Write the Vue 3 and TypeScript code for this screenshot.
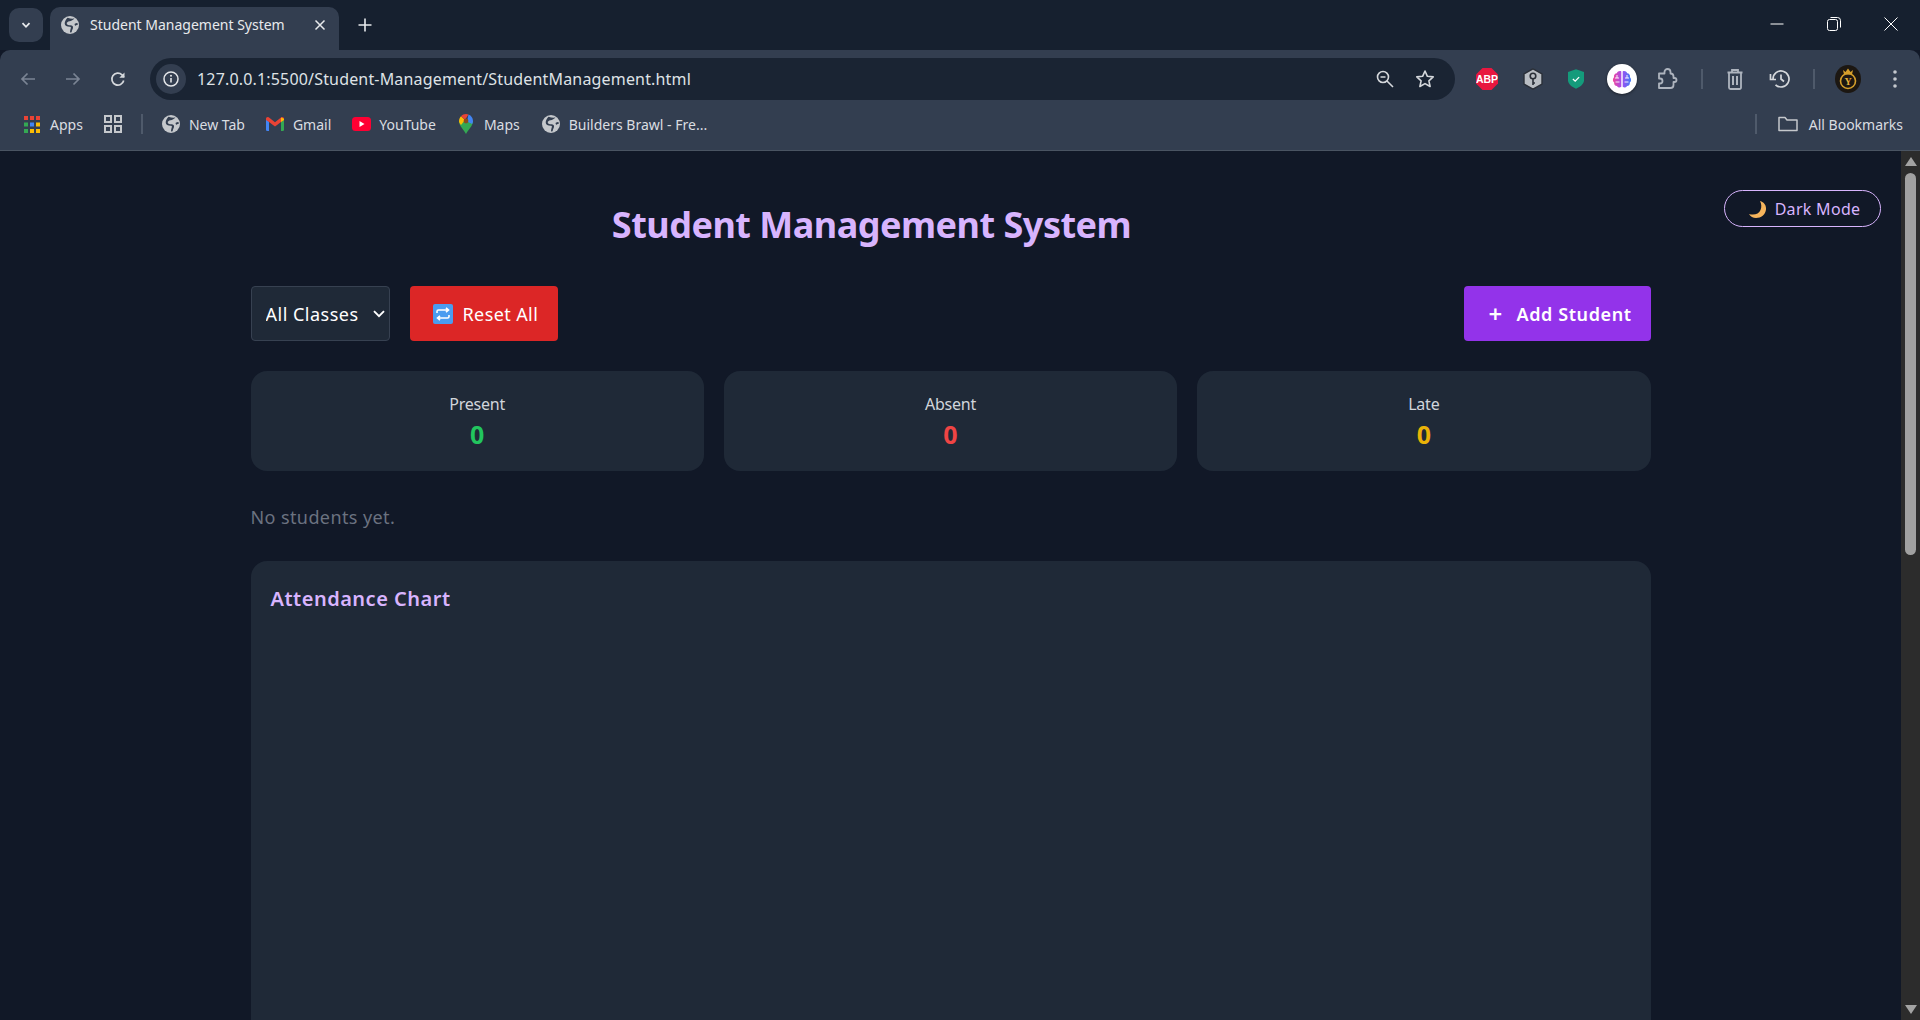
<script setup lang="ts">
import { ref } from 'vue'

interface Bookmark {
  label: string
  icon: string
}

interface Stat {
  label: string
  tone: string
  value: number
}

const bookmarks: Bookmark[] = [
  { label: 'New Tab', icon: 'globe' },
  { label: 'Gmail', icon: 'gmail' },
  { label: 'YouTube', icon: 'youtube' },
  { label: 'Maps', icon: 'maps' },
  { label: 'Builders Brawl - Fre...', icon: 'globe' },
]

const stats: Stat[] = [
  { label: 'Present', tone: 'green', value: 0 },
  { label: 'Absent', tone: 'red', value: 0 },
  { label: 'Late', tone: 'yellow', value: 0 },
]

const selectedClass = ref('all')
const url = '127.0.0.1:5500/Student-Management/StudentManagement.html'
</script>

<template>
  <div class="window">
    <svg class="defs" width="0" height="0" aria-hidden="true">
      <symbol id="globe" viewBox="0 0 18 18">
        <circle cx="9" cy="9" r="9" fill="#c5c8cc" />
        <path d="M6.500 1.800C9 2.600 11.500 2.800 13.500 2.500 12 4 10.500 5 8.500 5.300 6.800 5.600 5.500 6.500 5.800 7.800c.3 1.200 2 1.500 3.700 1.500 1.800 0 2.800 1 2.500 2.600-.3 1.500-1.300 2.500-1.300 4.300l-1.700.2c0-2 .7-3.300.9-4.600.1-.8-.5-1.100-1.400-1.100C6 10.700 3.700 9.600 3.700 7.500c0-2 1.300-4 2.800-5.700zM13.500 8c1-.7 2-1 3-.9l.2 1.900c-1.200 0-2 .2-2.600.9z" fill="#333e50" />
      </symbol>
      <symbol id="gmail" viewBox="0 0 18 14">
        <path d="M0 2.500 3 4.500V14H1.300A1.300 1.300 0 0 1 0 12.700z" fill="#4285f4" />
        <path d="M15 4.500 18 2.500v10.200a1.300 1.300 0 0 1-1.300 1.300H15z" fill="#34a853" />
        <path d="M3 5 0 3V1.800C0 .300 1.600-.500 2.800.400L3 .6 9 5.200 15 .6l.2-.2C16.400-.5 18 .300 18 1.800V3l-3 2-6 4.500z" fill="#ea4335" />
        <path d="M15 .6 18 1.800V3l-3 2z" fill="#fbbc04" />
      </symbol>
      <symbol id="youtube" viewBox="0 0 19 14">
        <rect width="19" height="14" rx="3.500" fill="#ff0033" />
        <path d="M7.500 4v6l5-3z" fill="#fff" />
      </symbol>
      <symbol id="maps" viewBox="0 0 14 20">
        <path d="M7 20C5.500 16.500 0 12 0 7h14c0 5-5.500 9.500-7 13z" fill="#34a853" />
        <path d="M0 7C0 5 .8 3.500 2 2.200L6 6 2 11C.8 9.800 0 8.500 0 7z" fill="#fbbc04" />
        <path d="M2 2.200C3.300.8 5 0 7 0l2.500.5L6 6z" fill="#ea4335" />
        <path d="M9.500.5C12 1.500 14 4 14 7c0 1-.3 2-.8 3L8 7.500z" fill="#4285f4" />
        <circle cx="7" cy="7" r="2.400" fill="#8a4b1f" />
      </symbol>
    </svg>

    <div class="tabstrip">
      <div class="tab-list">
        <svg width="12" height="12" viewBox="0 0 12 12"><path d="M2.500 4.200 6 7.800l3.500-3.600" fill="none" stroke="#e8eaed" stroke-width="1.800" /></svg>
      </div>
      <div class="tab">
        <svg class="tab-icon" width="18" height="18"><use href="#globe" /></svg>
        <span class="tab-title">Student Management System</span>
        <svg class="tab-close" width="12" height="12" viewBox="0 0 12 12"><path d="M1.500 1.500l9 9m0-9-9 9" stroke="#e8eaed" stroke-width="1.500" /></svg>
      </div>
      <svg class="new-tab" width="14" height="14" viewBox="0 0 14 14"><path d="M7 .5v13M.5 7h13" stroke="#e8eaed" stroke-width="1.600" /></svg>
      <div class="window-controls">
        <svg width="14" height="14" viewBox="0 0 14 14"><path d="M.5 7h13" stroke="#fff" stroke-width="1" /></svg>
        <svg width="14" height="14" viewBox="0 0 14 14"><rect x=".5" y="2.500" width="10" height="11" rx="2" fill="none" stroke="#fff" /><path d="M3.500.5h7a3 3 0 0 1 3 3v7" fill="none" stroke="#fff" /></svg>
        <svg width="14" height="14" viewBox="0 0 14 14"><path d="M.5.500l13 13m0-13-13 13" stroke="#fff" stroke-width="1" /></svg>
      </div>
    </div>

    <div class="toolbar">
      <div class="nav-buttons">
        <svg width="18" height="18" viewBox="0 0 18 18"><path d="M16 9H3M8.500 3.500 3 9l5.500 5.500" fill="none" stroke="#7b8494" stroke-width="1.700" /></svg>
        <svg width="18" height="18" viewBox="0 0 18 18"><path d="M2 9h13M9.500 3.500 15 9l-5.500 5.500" fill="none" stroke="#7b8494" stroke-width="1.700" /></svg>
        <svg width="18" height="18" viewBox="0 0 18 18"><path d="M14.700 10.500A6 6 0 1 1 13 4.800L15 7" fill="none" stroke="#d5d8dc" stroke-width="1.700" /><path d="M15.500 2.500v5.200h-5.200z" fill="#d5d8dc" /></svg>
      </div>
      <div class="omnibox">
        <div class="site-info">
          <svg width="16" height="16" viewBox="0 0 16 16"><circle cx="8" cy="8" r="7" fill="none" stroke="#e3e5e8" stroke-width="1.500" /><path d="M8 7v4.500" stroke="#e3e5e8" stroke-width="1.600" /><circle cx="8" cy="4.800" r="1" fill="#e3e5e8" /></svg>
        </div>
        <span class="url">{{ url }}</span>
        <svg class="omni-zoom" width="20" height="20" viewBox="0 0 20 20"><circle cx="8" cy="8" r="5.500" fill="none" stroke="#d5d8dc" stroke-width="1.600" /><path d="M12 12l6 6M5.500 8h5" stroke="#d5d8dc" stroke-width="1.600" /></svg>
        <svg class="omni-star" width="20" height="20" viewBox="0 0 20 20"><path d="M10 2l2.400 5.300 5.800.6-4.300 3.900 1.200 5.700L10 14.600l-5.100 2.900 1.200-5.700L1.800 7.900l5.800-.6z" fill="none" stroke="#d5d8dc" stroke-width="1.600" stroke-linejoin="round" /></svg>
      </div>
      <div class="extensions">
        <svg class="ext" width="22" height="22" viewBox="0 0 22 22"><path d="M6.500 0h9L22 6.500v9L15.500 22h-9L0 15.500v-9z" fill="#e8173f" /><text x="11" y="15" text-anchor="middle" class="abp-text">ABP</text></svg>
        <svg class="ext" width="20" height="22" viewBox="0 0 20 22"><path d="M10 .8l9 5.100v10.200l-9 5.100-9-5.100V5.900z" fill="#b9bdc3" stroke="#2a2f38" stroke-width="1.400" /><circle cx="10" cy="8" r="2.800" fill="none" stroke="#2a2f38" stroke-width="1.600" /><path d="M10 10.500v6.500M10 15h2" stroke="#2a2f38" stroke-width="1.600" /></svg>
        <svg class="ext" width="16" height="20" viewBox="0 0 18 22"><path d="M9 0l9 3v9.500c0 4.500-5 8-9 9.500-4-1.500-9-5-9-9.500V3z" fill="#149b7b" /><path d="M5.500 11l2.600 2.400 4.400-4.500" fill="none" stroke="#fff" stroke-width="1.500" /></svg>
        <div class="brain">
          <svg width="20" height="20" viewBox="0 0 20 20">
            <defs>
              <linearGradient id="brain-grad" x1="0" x2="1" y1="0" y2="0">
                <stop offset="0" stop-color="#f0479b" />
                <stop offset=".5" stop-color="#a04df0" />
                <stop offset="1" stop-color="#3f7df5" />
              </linearGradient>
            </defs>
            <path d="M9.300 2.500v15.200c-1.300 1.300-3.500 1-4.300-.7C3 17 1.800 15.300 2.200 13.500.5 12.300.5 9.500 2 8.200 1.500 6 3 4.300 4.800 4.200 5.500 2.300 8 1.500 9.300 2.500zM10.700 2.500v15.200c1.300 1.300 3.500 1 4.300-.7 2 0 3.200-1.700 2.800-3.500 1.700-1.200 1.700-4 .2-5.300.5-2.200-1-3.900-2.800-4-.7-1.900-3.200-2.700-4.500-1.700z" fill="url(#brain-grad)" />
            <path d="M3 9h4M5 6v3M3.500 13h4M17 9h-4M15 6v3M16.500 13h-4" stroke="#fff" stroke-width=".9" fill="none" />
          </svg>
        </div>
        <svg class="ext" width="22" height="24" viewBox="0 0 22 24"><path d="M2 6.500h5.500V5a3 3 0 0 1 6 0v1.500a3 3 0 0 1 3 3V11h1a1.500 1.500 0 0 1 0 4h-1v3a3 3 0 0 1-3 3H2v-4.500h1a2.500 2.500 0 0 0 0-5H2z" fill="none" stroke="#aeb4be" stroke-width="1.800" stroke-linejoin="round" /></svg>
        <span class="tool-sep"></span>
        <svg class="ext" width="16" height="22" viewBox="0 0 16 22"><path d="M.5 4.500h15M5 4.500V2h6v2.500M2 4.500V19.500a1.500 1.500 0 0 0 1.500 1.500h9a1.500 1.500 0 0 0 1.500-1.500V4.500" fill="none" stroke="#aeb4be" stroke-width="1.800" /><path d="M6 8v9M10 8v9" fill="none" stroke="#aeb4be" stroke-width="2" /></svg>
        <svg class="ext" width="22" height="20" viewBox="0 0 22 20"><path d="M4 10a8 8 0 1 1 2.500 5.800" fill="none" stroke="#d5d8dc" stroke-width="1.700" /><path d="M1.500 5v5.500H7M12 5.500V10l3 2.500" fill="none" stroke="#d5d8dc" stroke-width="1.700" /></svg>
        <span class="tool-sep"></span>
        <svg class="avatar" width="26" height="28" viewBox="0 0 26 28"><ellipse cx="13" cy="14" rx="13" ry="14" fill="#1c1712" /><circle cx="13" cy="16" r="7.500" fill="none" stroke="#d59f2b" stroke-width="1.600" /><path d="M8 5l2.500 2L13 3.500 15.500 7 18 5l-1 4.500H9z" fill="#d59f2b" /><text x="13" y="19.500" text-anchor="middle" class="avatar-text">Y</text></svg>
        <svg class="ext menu" width="6" height="20" viewBox="0 0 6 20"><circle cx="3" cy="3" r="1.800" fill="#c4c8ce" /><circle cx="3" cy="10" r="1.800" fill="#c4c8ce" /><circle cx="3" cy="17" r="1.800" fill="#c4c8ce" /></svg>
      </div>
    </div>

    <div class="bookmarks">
      <div class="bm apps">
        <svg width="16" height="17" viewBox="0 0 16 17">
          <rect x="0" y="0" width="4" height="4" fill="#ea4335" /><rect x="6" y="0" width="4" height="4" fill="#ea4335" /><rect x="12" y="0" width="4" height="4" fill="#ea4335" />
          <rect x="0" y="6.500" width="4" height="4" fill="#34a853" /><rect x="6" y="6.500" width="4" height="4" fill="#4285f4" /><rect x="12" y="6.500" width="4" height="4" fill="#fbbc04" />
          <rect x="0" y="13" width="4" height="4" fill="#34a853" /><rect x="6" y="13" width="4" height="4" fill="#fbbc04" /><rect x="12" y="13" width="4" height="4" fill="#fbbc04" />
        </svg>
        <span>Apps</span>
      </div>
      <svg class="grid-icon" width="18" height="18" viewBox="0 0 18 18"><g fill="none" stroke="#c5c8cc" stroke-width="2"><rect x="1" y="1" width="6" height="6" /><rect x="11" y="1" width="6" height="6" /><rect x="1" y="11" width="6" height="6" /><rect x="11" y="11" width="6" height="6" /></g></svg>
      <span class="bm-sep"></span>
      <div v-for="b in bookmarks" :key="b.label" class="bm" :class="`bm-${b.icon}`">
        <svg class="bm-icon"><use :href="`#${b.icon}`" /></svg>
        <span>{{ b.label }}</span>
      </div>
      <span class="bm-sep right"></span>
      <div class="bm all">
        <svg width="20" height="16" viewBox="0 0 20 16"><path d="M1 14.500V1.500h6l2 2.500h10v10.500z" fill="none" stroke="#c5c8cc" stroke-width="1.500" stroke-linejoin="round" /></svg>
        <span>All Bookmarks</span>
      </div>
    </div>

    <div class="viewport">
      <div class="page">
        <button class="dark-toggle" type="button">
          <svg width="18" height="17" viewBox="0 0 18 17"><path d="M11 0C15 1 17.500 4.500 17 8.500 16.500 13.500 12 17 7 17 4 17 1.500 15.500 0 13 5 14.500 10 13 11.500 9 12.800 6 12.500 3 11 0z" fill="#f6b45c" /></svg>
          Dark Mode
        </button>
        <main class="container">
          <h1 class="title">Student Management System</h1>
          <div class="controls">
            <div class="controls-left">
              <div class="select-wrap">
                <select v-model="selectedClass" class="class-select">
                  <option value="all">All Classes</option>
                </select>
                <svg class="select-arrow" width="12" height="8" viewBox="0 0 12 8"><path d="M1 1.200 6 6.200l5-5" fill="none" stroke="#fff" stroke-width="1.900" /></svg>
              </div>
              <button class="btn btn-reset" type="button">
                <svg width="20" height="20" viewBox="0 0 20 20"><rect width="20" height="20" rx="2" fill="#4a9cf0" /><path d="M4 9V7.500C4 6.500 4.800 6 5.500 6h9.500M13 3.800 15.500 6 13 8.200M16 11v1.500c0 1-.8 1.500-1.500 1.500H5M7 11.800 4.500 14 7 16.200" fill="none" stroke="#fff" stroke-width="1.600" /></svg>
                Reset All
              </button>
            </div>
            <button class="btn btn-add" type="button"><span class="plus">+</span>Add Student</button>
          </div>
          <section class="stats">
            <div v-for="s in stats" :key="s.label" class="stat-card">
              <div class="stat-label">{{ s.label }}</div>
              <div class="stat-value" :class="s.tone">{{ s.value }}</div>
            </div>
          </section>
          <p class="empty">No students yet.</p>
          <section class="chart-card">
            <h2 class="chart-title">Attendance Chart</h2>
          </section>
        </main>
      </div>
      <div class="scrollbar">
        <span class="arrow up"></span>
        <span class="thumb"></span>
        <span class="spacer"></span>
        <span class="arrow down"></span>
      </div>
    </div>
  </div>
</template>

<style>
html, body {
  margin: 0;
  height: 100%;
  overflow: hidden;
  background: #111827;
}
</style>

<style scoped>
.window {
  height: 1020px;
  display: flex;
  flex-direction: column;
  font-family: "Noto Sans", "Open Sans", sans-serif;
  overflow: hidden;
}
.defs {
  position: absolute;
}

/* browser chrome */
.tabstrip {
  height: 50px;
  flex: none;
  display: flex;
  background: #16202f;
  box-sizing: border-box;
}
.tab-list {
  width: 34px;
  height: 34px;
  margin: 8px 7px 0 9px;
  border-radius: 10px;
  background: #333e50;
  display: flex;
  align-items: center;
  justify-content: center;
}
.tab {
  width: 289px;
  height: 43px;
  margin-top: 7px;
  padding: 0 13px 8px 11px;
  box-sizing: border-box;
  border-radius: 10px 10px 0 0;
  background: #333e50;
  display: flex;
  align-items: center;
  color: #e8eaed;
}
.tab-icon {
  flex: none;
}
.tab-title {
  margin-left: 11px;
  font-size: 14px;
  white-space: nowrap;
}
.tab-close {
  margin-left: auto;
}
.new-tab {
  margin: 18px 0 0 19px;
}
.window-controls {
  margin-left: auto;
  padding: 17px 22px 0 0;
  display: flex;
  gap: 43px;
  height: 14px;
}
.toolbar {
  height: 58px;
  flex: none;
  background: #333e50;
  display: flex;
  align-items: center;
  border-radius: 10px 10px 0 0;
}
.nav-buttons {
  width: 150px;
  flex: none;
  box-sizing: border-box;
  padding: 0 0 0 19px;
  display: flex;
  gap: 27px;
}
.omnibox {
  width: 1305px;
  height: 42px;
  flex: none;
  border-radius: 21px;
  background: #1a2433;
  display: flex;
  align-items: center;
  padding: 0 20px 0 6px;
  box-sizing: border-box;
  color: #dfe2e6;
}
.site-info {
  width: 30px;
  height: 30px;
  flex: none;
  border-radius: 50%;
  background: #333e50;
  display: flex;
  align-items: center;
  justify-content: center;
}
.url {
  margin-left: 11px;
  font-size: 16px;
  letter-spacing: 0.17px;
  white-space: nowrap;
}
.omni-zoom {
  margin-left: auto;
}
.omni-star {
  margin-left: 20px;
}
.extensions {
  flex: 1;
  display: flex;
  align-items: center;
  padding-left: 21px;
}
.extensions > .ext:nth-child(2),
.extensions > .ext:nth-child(3) {
  margin-left: 25px;
}
.brain {
  width: 30px;
  height: 30px;
  margin-left: 23px;
  flex: none;
  border-radius: 50%;
  background: #fff;
  box-shadow: 0 1px 3px rgba(0, 0, 0, 0.45);
  display: flex;
  align-items: center;
  justify-content: center;
}
.brain + .ext {
  margin-left: 20px;
}
.tool-sep {
  width: 2px;
  height: 20px;
  flex: none;
  margin: 0 24px 0 22px;
  background: #4f5a6b;
}
.tool-sep + .ext + .ext {
  margin-left: 26px;
}
.avatar {
  flex: none;
  margin-left: -4px;
}
.menu {
  margin-left: 31px;
}
.abp-text {
  font: 700 10.500px "Liberation Sans", sans-serif;
  fill: #fff;
}
.avatar-text {
  font: 700 10px "Liberation Serif", serif;
  fill: #e2ae3c;
}

.bookmarks {
  height: 43px;
  flex: none;
  padding: 0 0 10px 24px;
  box-sizing: border-box;
  display: flex;
  align-items: center;
  background: #333e50;
  border-bottom: 1px solid #4a5462;
  color: #dadde1;
  font-size: 14px;
}
.bm {
  display: flex;
  align-items: center;
  white-space: nowrap;
}
.apps {
  gap: 10px;
}
.grid-icon {
  margin-left: 21px;
}
.bm-sep {
  width: 2px;
  height: 20px;
  margin: 0 19px;
  background: #4f5a6b;
}
.bm-sep.right {
  margin: 0 21px 0 auto;
}
.bm-icon {
  width: 18px;
  height: 18px;
  margin-right: 9px;
}
.bm-gmail,
.bm-youtube,
.bm-globe + .bm-globe {
  margin-left: 21px;
}
.bm-maps {
  margin-left: 23px;
}
.bm-maps + .bm-globe {
  margin-left: 22px;
}
.bm-gmail .bm-icon {
  height: 14px;
}
.bm-youtube .bm-icon {
  width: 19px;
  height: 14px;
  margin-right: 8px;
}
.bm-maps .bm-icon {
  width: 14px;
  height: 20px;
  margin-right: 11px;
}
.all {
  gap: 11px;
  padding-right: 17px;
}

/* page */
.viewport {
  flex: 1;
  min-height: 0;
  display: flex;
  background: #111827;
}
.page {
  flex: 1;
  min-width: 0;
  position: relative;
  overflow: hidden;
}
.dark-toggle {
  position: absolute;
  top: 39px;
  right: 20px;
  width: 157px;
  height: 37px;
  padding: 1px 0 0 4px;
  border: 1px solid #d8b4fe;
  border-radius: 19px;
  background: transparent;
  color: #d8b4fe;
  font: 400 16px "Noto Sans", sans-serif;
  letter-spacing: 0.3px;
  display: flex;
  align-items: center;
  justify-content: center;
  gap: 8px;
}
.container {
  width: 1400px;
  margin: 0 auto;
}
.title {
  margin: 0;
  padding: 50px 158px 0 0;
  text-align: center;
  font-size: 36px;
  line-height: 48px;
  font-weight: 700;
  color: #d8b4fe;
  letter-spacing: -0.5px;
}
.controls {
  margin-top: 37px;
  display: flex;
  justify-content: space-between;
}
.controls-left {
  display: flex;
  gap: 20px;
}
.select-wrap {
  position: relative;
  height: 55px;
}
.class-select {
  appearance: none;
  width: 139px;
  height: 55px;
  padding: 0 0 0 14px;
  background: #1f2937;
  border: 1px solid #374151;
  border-radius: 4px;
  color: #fff;
  font: 400 18px "Noto Sans", sans-serif;
  letter-spacing: 0.5px;
}
.select-arrow {
  position: absolute;
  top: 24px;
  right: 5px;
  pointer-events: none;
}
.btn {
  height: 55px;
  border: 0;
  border-radius: 4px;
  color: #fff;
  font-family: "Noto Sans", sans-serif;
  font-size: 18px;
  display: flex;
  align-items: center;
}
.btn-reset {
  width: 148px;
  background: #dc2626;
  padding: 0 0 0 23px;
  gap: 10px;
  letter-spacing: 0.4px;
}
.btn-add {
  width: 187px;
  background: #9333ea;
  padding: 0 0 0 25px;
  font-weight: 600;
  letter-spacing: 0.6px;
}
.plus {
  width: 28px;
  font-size: 24px;
  line-height: 24px;
  text-align: left;
}
.stats {
  margin-top: 30px;
  display: grid;
  grid-template-columns: repeat(3, 1fr);
  gap: 20px;
}
.stat-card {
  height: 100px;
  box-sizing: border-box;
  padding-top: 21px;
  border-radius: 16px;
  background: #1f2937;
  text-align: center;
}
.stat-label {
  font-size: 16px;
  line-height: 24px;
  color: #d1d5db;
  letter-spacing: -0.2px;
}
.stat-value {
  margin-top: 2px;
  font-size: 25px;
  line-height: 32px;
  font-weight: 700;
}
.green { color: #22c55e; }
.red { color: #ef4444; }
.yellow { color: #eab308; }
.empty {
  margin: 33px 0 0;
  font-size: 18px;
  line-height: 26px;
  color: #6b7280;
  letter-spacing: 0.4px;
}
.chart-card {
  margin-top: 31px;
  height: 800px;
  padding: 23px 20px;
  box-sizing: border-box;
  border-radius: 16px;
  background: #1f2937;
}
.chart-title {
  margin: 0;
  font-size: 20px;
  line-height: 30px;
  font-weight: 600;
  color: #d8b4fe;
  letter-spacing: 0.5px;
}

/* classic scrollbar */
.scrollbar {
  width: 19px;
  flex: none;
  background: #2c2c2c;
  display: flex;
  flex-direction: column;
  align-items: center;
  padding: 6px 0;
  box-sizing: border-box;
}
.arrow {
  width: 0;
  height: 0;
  border-left: 6.500px solid transparent;
  border-right: 6.500px solid transparent;
  flex: none;
}
.arrow.up {
  border-bottom: 9px solid #a3a3a3;
}
.arrow.down {
  border-top: 9px solid #a3a3a3;
}
.thumb {
  width: 11px;
  height: 382px;
  margin-top: 7px;
  flex: none;
  border-radius: 6px;
  background: #a1a1a1;
}
.spacer {
  flex: 1;
}
</style>
